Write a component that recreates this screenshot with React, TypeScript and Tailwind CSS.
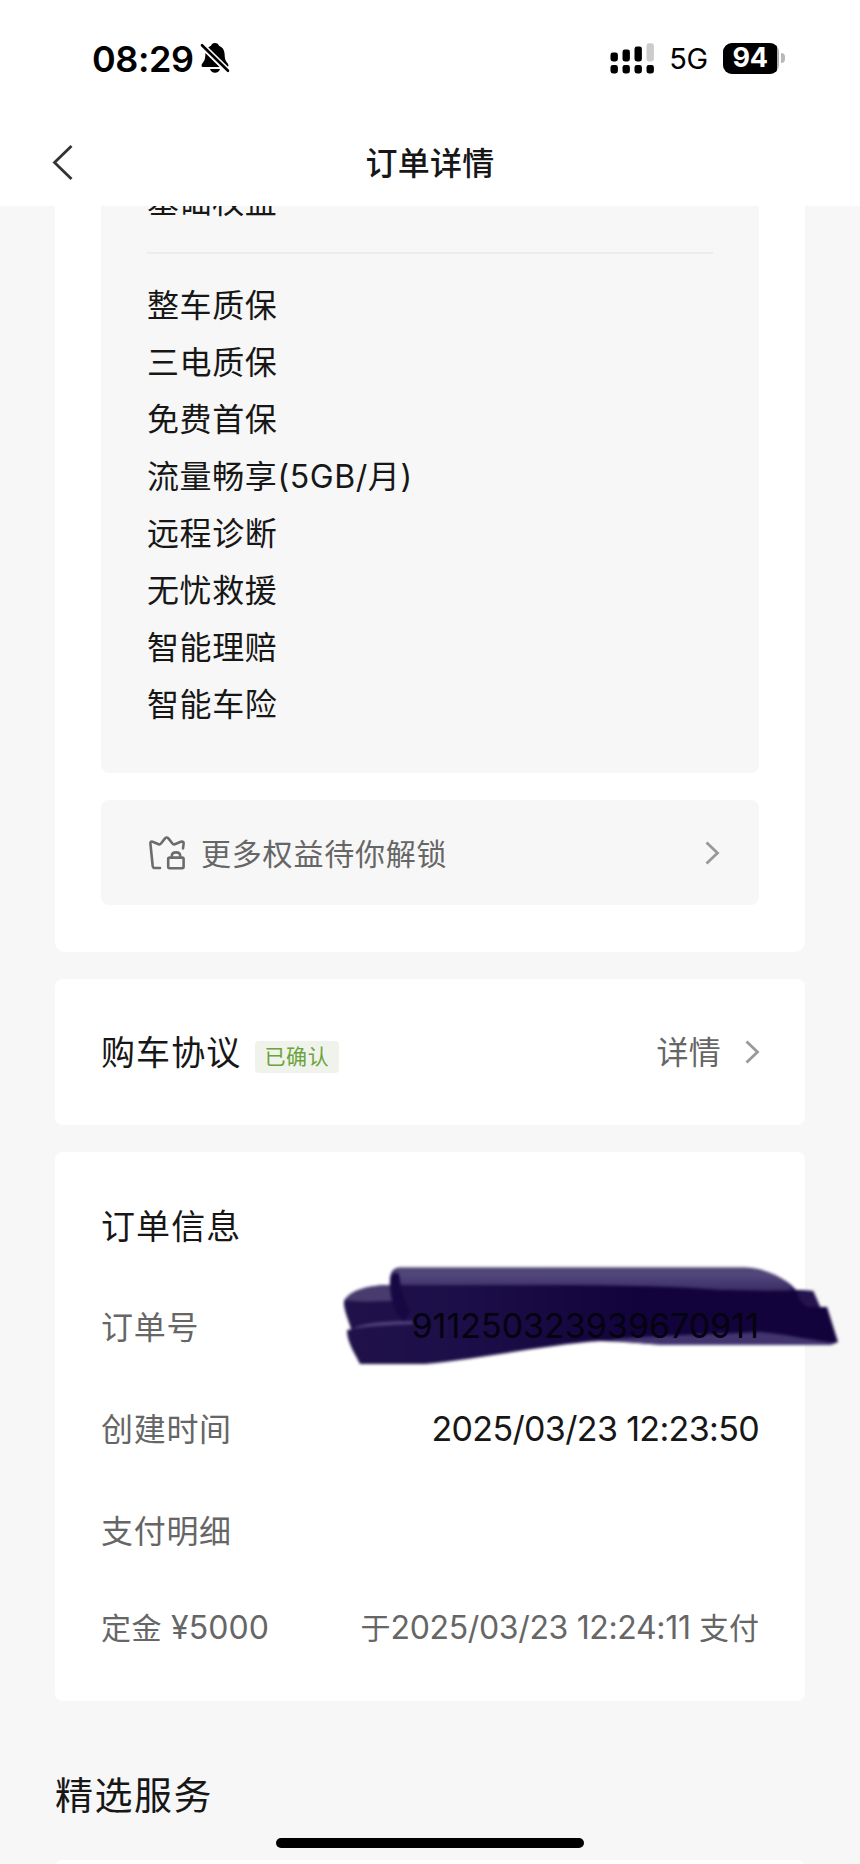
import React from 'react';

interface ChevronProps {
  className?: string;
}

interface InfoRowProps {
  label: string;
  children?: React.ReactNode;
  className?: string;
}

const benefits = ['整车质保', '三电质保', '免费首保', '流量畅享(5GB/月)', '远程诊断', '无忧救援', '智能理赔', '智能车险'];

const ChevronRight: React.FC<ChevronProps> = ({ className = '' }) => (
  <svg width="15" height="24" viewBox="0 0 15 24" fill="none" className={className}>
    <path d="M1.5 1.5L12.5 12L1.5 22.5" stroke="#999999" strokeWidth="2.8" />
  </svg>
);

const BellOff = () => (
  <svg width="30" height="32" viewBox="0 0 30 32" className="ml-1.5">
    <path
      d="M15 1C12.8 1 11.4 2.2 11 3.7C7.2 5.2 5.6 8.4 5.4 12C5.2 17 4.6 18.8 2.6 21C1.2 22.6 1.2 25 3 25H27C28.8 25 28.8 22.6 27.4 21C25.4 18.8 24.8 17 24.6 12C24.4 8.4 22.8 5.2 19 3.7C18.6 2.2 17.2 1 15 1Z"
      fill="#000"
    />
    <path d="M10 27H20C19.4 29.4 17.4 30.8 15 30.8C12.6 30.8 10.6 29.4 10 27Z" fill="#000" />
    <path d="M1.5 3L28.5 29.5" stroke="#fff" strokeWidth="6" />
    <path d="M2 3.2L28 28.8" stroke="#000" strokeWidth="2.6" strokeLinecap="round" />
  </svg>
);

const Signal = () => (
  <svg width="44" height="31" viewBox="0 0 44 31">
    <rect x="0.5" y="9.5" width="7.4" height="9" rx="2.4" />
    <rect x="12.5" y="6.5" width="7.4" height="12" rx="2.4" />
    <rect x="24.5" y="3.5" width="7.4" height="15" rx="2.4" />
    <rect x="36.5" y="0.3" width="7.4" height="18.2" rx="2.4" fill="#cccccc" />
    <rect x="0.5" y="22" width="7.4" height="8.4" rx="2.4" />
    <rect x="12.5" y="22" width="7.4" height="8.4" rx="2.4" />
    <rect x="24.5" y="22" width="7.4" height="8.4" rx="2.4" />
    <rect x="36.5" y="22" width="7.4" height="8.4" rx="2.4" />
  </svg>
);

const CrownLock = () => (
  <svg width="36" height="34" viewBox="0 0 36 34" fill="none" stroke="#6c6c6c" strokeWidth="2.6" strokeLinejoin="round" strokeLinecap="round">
    <path d="M11 32H5.8C4.4 32 3.9 31.4 3.7 30L1.4 7.6C1.2 5.8 2.2 5.2 3.6 5.8L9.6 8.2C10.8 8.6 11.4 8.2 12.2 7.2L16 2.4C17.2 1.2 18.2 1.2 19.4 2.4L23.2 7.2C24 8.2 24.6 8.6 25.8 8.2L31.8 5.8C33.8 5.2 34.8 6 34.6 7.8L34 12.4" />
    <rect x="19.2" y="21.6" width="15.4" height="10.6" rx="1.4" />
    <path d="M22.8 21.2V20C22.8 17.8 24.6 16.4 27 16.4C29.4 16.4 31.2 17.8 31.2 20V21.2" />
  </svg>
);

// Marker strokes that hide the order number
const MarkerStrokes = () => (
  <svg width="530" height="150" viewBox="0 0 530 150" className="absolute -top-9 left-[229px] max-w-none">
    <defs>
      <filter id="soft" x="-5%" y="-10%" width="110%" height="120%" colorInterpolationFilters="sRGB">
        <feGaussianBlur stdDeviation="1.4" />
      </filter>
      <linearGradient id="edge" x1="0" y1="0" x2="0" y2="1">
        <stop offset="0" stopColor="#4c4070" />
        <stop offset="0.25" stopColor="#53487c" />
        <stop offset="1" stopColor="#3a2b66" />
      </linearGradient>
      <linearGradient id="body" gradientUnits="userSpaceOnUse" x1="0" y1="0" x2="510" y2="0">
        <stop offset="0" stopColor="#201149" />
        <stop offset="0.25" stopColor="#1c0e48" />
        <stop offset="0.6" stopColor="#12033c" />
        <stop offset="1" stopColor="#12033c" />
      </linearGradient>
    </defs>
    <g filter="url(#soft)">
      <path d="M60 45C40 45 20 50 14 61C13 68 18 78 22 92L120 94L120 60L80 46Z" fill="url(#body)" />
      <path d="M60 45C40 45 20 50 15 60C30 63 50 61 66 61L62 45Z" fill="#483b6d" />
      <path d="M60 40C60 32 64 27.5 70 27.5H415C438 28 460 42 466 50L483 51L490 67L420 90L90 90C75 82 60 62 60 40Z" fill="url(#body)" />
      <path d="M17 90C40 86 60 86 90 84L300 50L465 50L483 51L490 67H497L508 102L500 105H335C315 104 290 101 270 101C220 104 150 119 95 124H30C24 112 17 102 17 90Z" fill="url(#body)" />
      <path d="M22 89C32 83 55 81 82 81L84 84C60 85 40 86 22 89Z" fill="#50427a" />
      <path d="M62 45V36C63 31 66 28 70 28H415C438 29 458 41 463 50C440 52 410 50 390 50C330 45 260 45 190 45Z" fill="url(#edge)" />
      <path d="M60 40C59 58 66 76 75 82L80 70C72 58 71 48 69 34C66 31 62 34 60 40Z" fill="#160842" />
      <path d="M280 99C330 95 390 94 430 92C455 94 480 100 505 103L500 105H335C315 104 298 102 280 99Z" fill="#42346e" />
      <path d="M467 52L483 51L490 67H478C472 64 468 59 467 52Z" fill="#24134f" />
    </g>
  </svg>
);

const StatusBar = () => (
  <div className="flex h-[116px] items-center justify-between pr-[75px] pl-[92px]">
    <div className="flex items-center">
      <span className="pt-px text-[36px] leading-10 font-semibold tracking-[-0.4px] text-black">08:29</span>
      <BellOff />
    </div>
    <div className="flex items-center">
      <Signal />
      <span className="ml-[15px] pt-0.5 text-[29px] leading-8 tracking-[-0.2px] text-black">5G</span>
      <div className="ml-[15px] flex items-center">
        <div className="flex h-[31px] w-14 overflow-hidden rounded-[9px] bg-[#b0b0b0]">
          <span className="flex w-[54px] items-center justify-center bg-black text-[27px] leading-8 font-bold tracking-[-0.5px] text-white">94</span>
        </div>
        <div className="ml-0.5 h-2.5 w-1 rounded-r-full bg-[#b8b8b8]" />
      </div>
    </div>
  </div>
);

const InfoRow: React.FC<InfoRowProps> = ({ label, children, className = '' }) => (
  <div className={`relative flex items-center justify-between ${className}`}>
    <span className="pt-px text-[32px] tracking-[0.7px] text-[#666666]">{label}</span>
    {children}
  </div>
);

const App: React.FC = () => {
  return (
    <div className="relative flex h-[1864px] w-[860px] flex-col overflow-hidden bg-[#f7f7f7] font-['Inter','Noto_Sans_CJK_SC',sans-serif] text-[#171717]">
      <header className="h-[206px] flex-shrink-0 bg-white">
        <StatusBar />
        <div className="grid h-[92px] grid-cols-3 items-center px-[51px]">
          <svg width="22" height="36" viewBox="0 0 22 36" fill="none">
            <path d="M20.5 2L3.5 18.5L20.5 35" stroke="#333333" strokeWidth="2.8" />
          </svg>
          <h1 className="pt-1 text-center text-[32px] leading-10 font-medium tracking-[0.2px]">订单详情</h1>
        </div>
      </header>

      <main className="flex min-h-0 flex-1 flex-col gap-[27px] overflow-hidden px-[55px]">
        <section className="h-[746px] flex-shrink-0 rounded-b-[10px] bg-white px-[46px]">
          <div className="h-[567px] overflow-hidden rounded-b-lg bg-[#f7f7f7] px-[46px]">
            <h2 className="-mt-6 h-[72px] border-b-2 border-[#ececec] text-[32px] leading-10 tracking-[0.6px]">基础权益</h2>
            <ul className="pt-[23px]">
              {benefits.map(b => (
                <li key={b} className="h-[57px] text-[32px] leading-[57px] tracking-[0.6px]">{b}</li>
              ))}
            </ul>
          </div>
          <button className="mt-[27px] flex h-[105px] w-full items-center rounded-lg bg-[#f7f7f7] pr-[39px] pl-12">
            <CrownLock />
            <span className="ml-4 pt-[3px] text-[30px] tracking-[0.8px] text-[#666666]">更多权益待你解锁</span>
            <ChevronRight className="ml-auto" />
          </button>
        </section>

        <section className="flex h-[146px] flex-shrink-0 items-center rounded-lg bg-white pr-[45px] pl-[46px]">
          <h2 className="pt-px text-[34px] tracking-[1.1px]">购车协议</h2>
          <span className="mt-[9px] ml-3.5 flex h-8 w-[84px] items-center justify-center rounded bg-[#eff3ec] pt-px pr-px text-[21px] tracking-[0.6px] text-[#6ba43a]">已确认</span>
          <span className="ml-auto pt-px text-[32px] tracking-[0.3px] text-[#666666]">详情</span>
          <ChevronRight className="ml-6" />
        </section>

        <section className="h-[549px] flex-shrink-0 rounded-lg bg-white px-[46px] pt-[47px]">
          <h2 className="text-[34px] leading-[56px] tracking-[1.1px]">订单信息</h2>
          <InfoRow label="订单号" className="mt-[21px] h-[102px]">
            <MarkerStrokes />
            <span className="relative z-10 pb-[3px] text-[34px] text-[#05020f]">911250323939670911</span>
          </InfoRow>
          <InfoRow label="创建时间" className="h-[102px]">
            <span className="pb-0.5 text-[34px] tracking-[-0.65px]">2025/03/23 12:23:50</span>
          </InfoRow>
          <InfoRow label="支付明细" className="h-[102px]" />
          <div className="flex h-[92px] items-center justify-between text-[30px] text-[#666666]">
            <span className="tracking-[0.5px]">定金 <span className="text-[32px] tracking-[0.1px]">¥5000</span></span>
            <span>于<span className="text-[32px] tracking-[-0.35px]">2025/03/23 12:24:11</span> 支付</span>
          </div>
        </section>

        <section className="flex-shrink-0">
          <h2 className="pt-[39px] text-[38px] leading-[56px] tracking-[1.5px]">精选服务</h2>
          <div className="mt-[37px] h-20 rounded-lg bg-white" />
        </section>
      </main>

      <div className="absolute bottom-4 left-1/2 h-2.5 w-[308px] -translate-x-1/2 rounded-full bg-black" />
    </div>
  );
};

export default App;
